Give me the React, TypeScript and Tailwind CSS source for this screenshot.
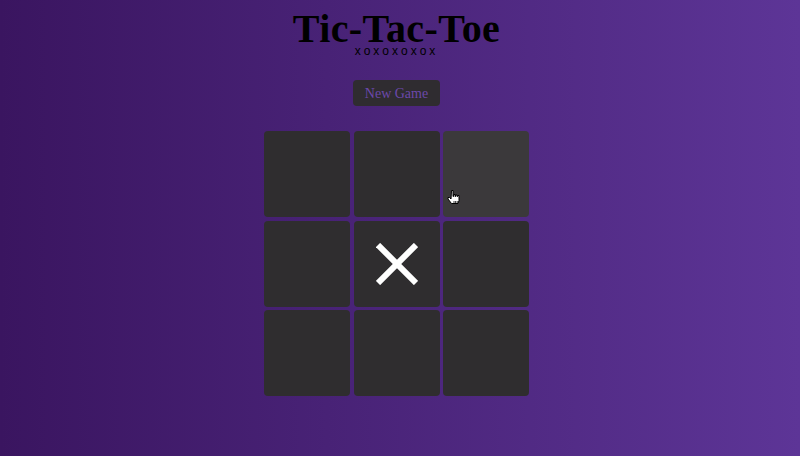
import { useState } from "react";

type Mark = "X" | "O" | null;

function XMark() {
  return (
    <svg viewBox="0 0 42 42" className="w-[42px] h-[42px]" fill="none" stroke="#ffffff" strokeWidth="6">
      <line x1="2" y1="2" x2="40" y2="40" />
      <line x1="40" y1="2" x2="2" y2="40" />
    </svg>
  );
}

function OMark() {
  return (
    <svg viewBox="0 0 42 42" className="w-[42px] h-[42px]" fill="none" stroke="#ffffff" strokeWidth="6">
      <circle cx="21" cy="21" r="17" />
    </svg>
  );
}

// pointer cursor, the screenshot caught it over the top-right cell
function HandCursor() {
  return (
    <svg viewBox="0 0 14 16" className="w-[14px] h-[16px]">
      <path
        d="M4.5 0.5h1.5v6h0.5v-2h1.5v2h0.5v-1.5h1.5v1.5h0.5v-1h1.5v5l-1 3h-6.5l-3.5-4.5v-1.5h1.5l1.5 1.5z"
        fill="#ffffff"
        stroke="#000000"
        strokeWidth="1"
        strokeLinejoin="round"
      />
      <line x1="7" y1="11" x2="7" y2="13" stroke="#000" strokeWidth="0.8" />
      <line x1="8.6" y1="11" x2="8.6" y2="13" stroke="#000" strokeWidth="0.8" />
      <line x1="10.2" y1="11" x2="10.2" y2="13" stroke="#000" strokeWidth="0.8" />
    </svg>
  );
}

export default function App() {
  const [board, setBoard] = useState<Mark[]>([null, null, null, null, "X", null, null, null, null]);
  const hovered = 2;

  return (
    <div className="w-full h-[456px] bg-gradient-to-r from-[#3a1560] to-[#5d3597] flex justify-center pr-[7px] overflow-hidden">
      <div className="flex flex-col items-center pt-[11px]">
        <h1 className="font-['Liberation_Serif',serif] font-bold text-[40px] leading-[36px] tracking-[0.4px] text-black">
          Tic-Tac-Toe
        </h1>
        <div className="font-['Liberation_Sans',sans-serif] text-[12px] leading-[8px] tracking-[3px] text-black">
          xoxoxoxox
        </div>

        <button
          onClick={() => setBoard(Array(9).fill(null))}
          className="mt-[25px] h-[26px] w-[87px] rounded bg-[#2f2c30] font-['Liberation_Serif',serif] text-[14px] text-[#6c48aa]"
        >
          New Game
        </button>

        <div className="mt-[25px] grid grid-cols-[repeat(3,86px)] grid-rows-[repeat(3,86px)] gap-[3.5px]">
          {board.map((cell, i) => (
            <div
              key={i}
              className={`relative rounded flex items-center justify-center ${
                i === hovered ? "bg-[#3b393b]" : "bg-[#2f2d2f]"
              }`}
            >
              {cell === "X" && <XMark />}
              {cell === "O" && <OMark />}
              {i === hovered && (
                <div className="absolute left-[4px] top-[59px]">
                  <HandCursor />
                </div>
              )}
            </div>
          ))}
        </div>
      </div>
    </div>
  );
}
